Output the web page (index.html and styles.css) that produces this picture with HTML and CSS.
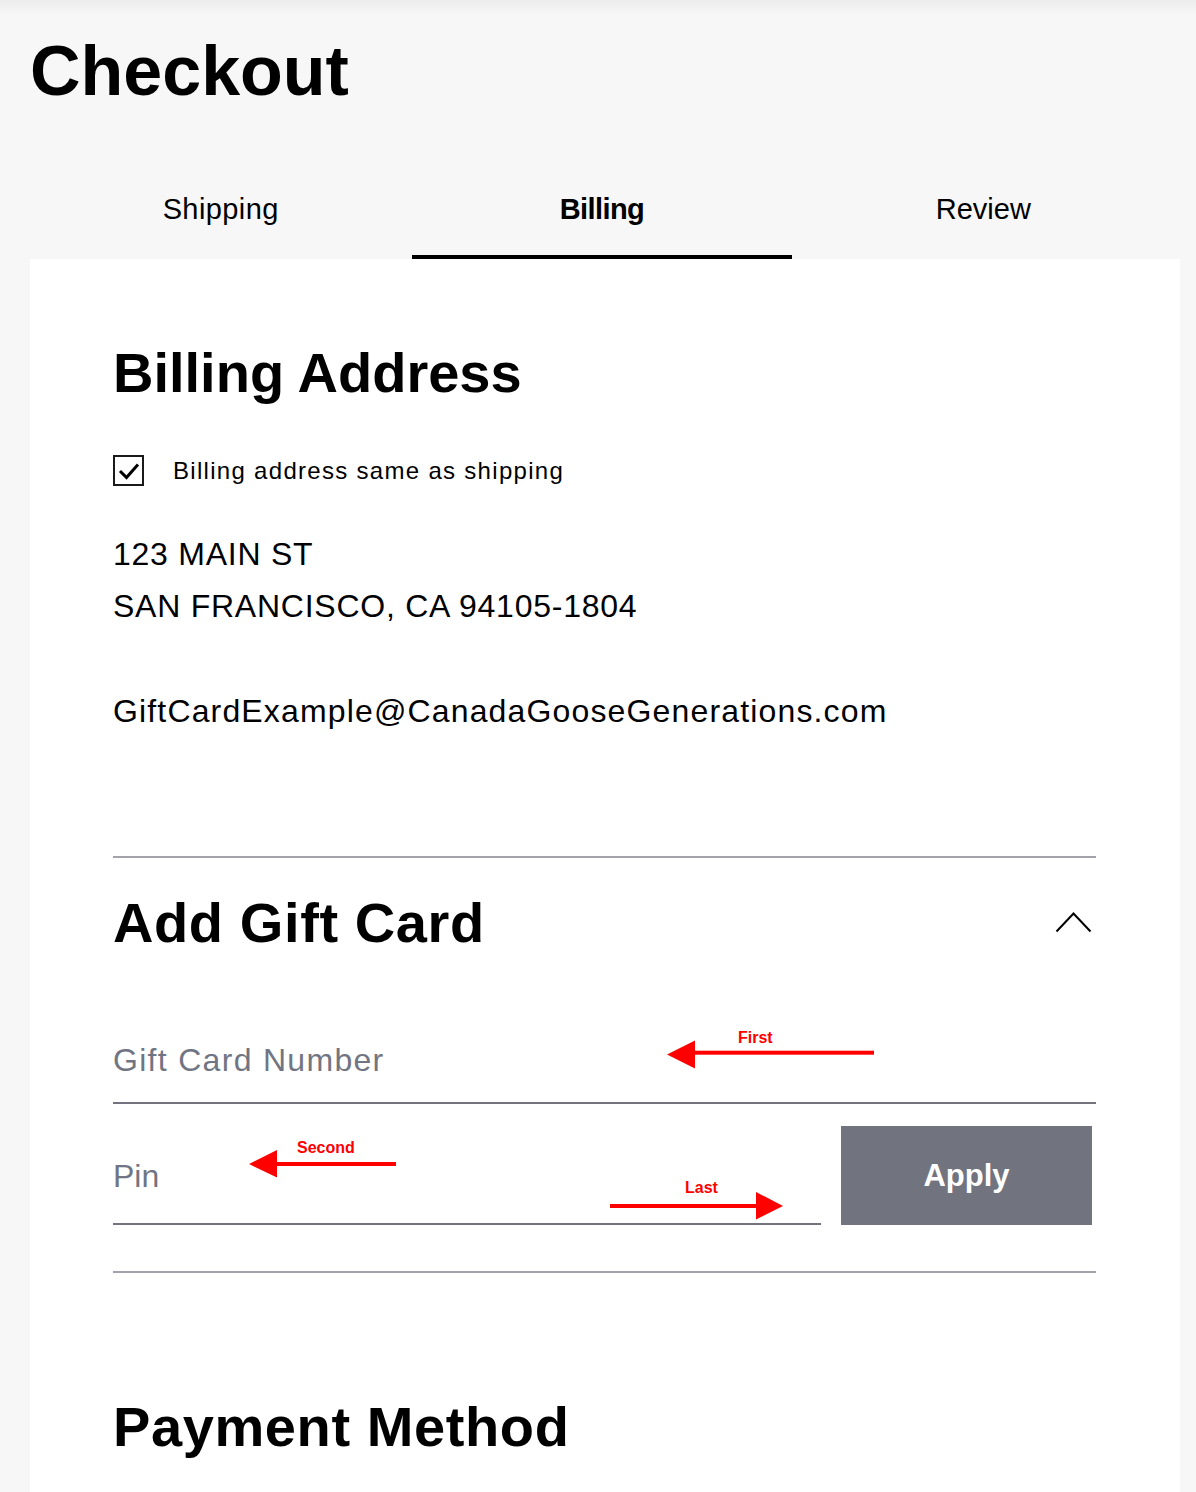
FILE: index.html
```html
<!DOCTYPE html>
<html lang="en">
<head>
<meta charset="utf-8">
<title>Checkout</title>
<link rel="stylesheet" href="styles.css">
</head>
<body>
<header class="page-head">
  <h1 class="title">Checkout</h1>
</header>
<nav class="tabs">
  <div class="tab">Shipping</div>
  <div class="tab active">Billing</div>
  <div class="tab">Review</div>
</nav>
<main class="card">
  <section class="billing">
    <h2 class="section-title">Billing Address</h2>
    <label class="check-row">
      <span class="checkbox">
        <svg width="27" height="27" viewBox="0 0 27 27"><polyline points="5,14 11.5,20.5 23,7.5" fill="none" stroke="#000" stroke-width="3"/></svg>
      </span>
      <span class="check-label">Billing address same as shipping</span>
    </label>
    <div class="address">
      <p>123 MAIN ST</p>
      <p>SAN FRANCISCO, CA 94105-1804</p>
    </div>
    <p class="email">GiftCardExample@CanadaGooseGenerations.com</p>
  </section>
  <hr class="divider">
  <section class="gift">
    <div class="gift-head">
      <h2 class="section-title wide">Add Gift Card</h2>
      <svg class="chevron" width="38" height="22" viewBox="0 0 38 22"><polyline points="1.5,20.5 18.5,2.5 35.5,20.5" fill="none" stroke="#000" stroke-width="2"/></svg>
    </div>
    <div class="field field-number"><span class="placeholder">Gift Card Number</span></div>
    <div class="pin-row">
      <div class="field field-pin"><span class="placeholder">Pin</span></div>
      <button class="apply" type="button">Apply</button>
    </div>
  </section>
  <hr class="divider">
  <section class="payment">
    <h2 class="section-title wide">Payment Method</h2>
  </section>
</main>
<div class="annotations">
  <svg class="arrows" width="1196" height="1492" viewBox="0 0 1196 1492">
    <polygon points="667,1054.5 695,1040.5 695,1068.5" fill="#ff0000"/>
    <rect x="694" y="1050.7" width="180" height="4" fill="#ff0000"/>
    <polygon points="249,1164 277,1150 277,1177.5" fill="#ff0000"/>
    <rect x="276" y="1162" width="120" height="4" fill="#ff0000"/>
    <polygon points="783,1206 756,1192 756,1219.5" fill="#ff0000"/>
    <rect x="610" y="1204" width="147" height="4" fill="#ff0000"/>
  </svg>
  <span class="note note-first">First</span>
  <span class="note note-second">Second</span>
  <span class="note note-last">Last</span>
</div>
</body>
</html>
```

FILE: styles.css
```css
html, body {
  margin: 0;
  padding: 0;
}
body {
  position: relative;
  height: 1492px;
  background: linear-gradient(#ececec 0, #f7f7f7 14px) no-repeat, #f7f7f7;
  font-family: "Liberation Sans", Arial, sans-serif;
  color: #000;
  overflow: hidden;
}
.page-head {
  padding: 31px 0 0 30px;
}
.title {
  margin: 0;
  font-size: 70px;
  line-height: 80px;
  font-weight: 700;
  letter-spacing: 0;
}
.tabs {
  display: grid;
  grid-template-columns: repeat(3, 1fr);
  margin-left: 30px;
  width: 1144px;
}
.tab {
  text-align: center;
  font-size: 29px;
  line-height: 36px;
  padding: 80px 0 28px;
  border-bottom: 4px solid transparent;
  margin: 0 1px;
}
.tab:first-child {
  letter-spacing: 0.4px;
}
.tab.active {
  font-weight: 700;
  letter-spacing: -0.6px;
  border-bottom-color: #000;
}
.card {
  margin-left: 30px;
  width: 1150px;
  box-sizing: border-box;
  background: #fff;
  padding: 82px 84px 34px 83px;
}
.section-title {
  margin: 0;
  font-size: 56px;
  line-height: 64px;
  font-weight: 700;
}
.section-title.wide {
  letter-spacing: 0.6px;
}
.check-row {
  display: flex;
  align-items: center;
  gap: 29px;
  margin-top: 50px;
  height: 31px;
}
.checkbox {
  width: 27px;
  height: 27px;
  border: 2px solid #1a1a1a;
  display: block;
}
.checkbox svg {
  display: block;
}
.check-label {
  font-size: 24px;
  line-height: 31px;
  letter-spacing: 1.3px;
}
.address {
  margin-top: 42px;
}
.address p,
.email {
  margin: 0;
  font-size: 32px;
  line-height: 52px;
  letter-spacing: 0.75px;
}
.email {
  margin-top: 53px;
  letter-spacing: 1.15px;
}
.divider {
  margin: 119px 0 0;
  border: 0;
  height: 2px;
  background: #a1a2aa;
}
.gift-head {
  margin-top: 33px;
  display: flex;
  align-items: center;
  justify-content: space-between;
}
.chevron {
  display: block;
  margin-right: 3px;
  margin-top: -2px;
}
.field {
  border-bottom: 2px solid #72737f;
  font-size: 32px;
  line-height: 40px;
  color: #717583;
}
.field-number {
  margin-top: 85px;
  padding-bottom: 22px;
  letter-spacing: 1.3px;
}
.pin-row {
  display: flex;
  align-items: flex-end;
  gap: 20px;
  margin-top: 22px;
  margin-right: 4px;
}
.field-pin {
  flex: 1;
  padding-bottom: 27px;
}
.apply {
  width: 251px;
  height: 99px;
  border: 0;
  background: #71737f;
  color: #fff;
  font-family: "Liberation Sans", Arial, sans-serif;
  font-size: 31px;
  font-weight: 700;
  padding: 0;
}
.gift + .divider {
  margin-top: 46px;
}
.payment {
  margin-top: 122px;
}
.annotations {
  position: absolute;
  left: 0;
  top: 0;
  width: 1196px;
  height: 1492px;
  pointer-events: none;
}
.arrows {
  position: absolute;
  left: 0;
  top: 0;
}
.note {
  position: absolute;
  color: #ff0000;
  font-size: 16px;
  line-height: 16px;
  font-weight: 700;
}
.note-first { left: 738px; top: 1030px; }
.note-second { left: 297px; top: 1140px; }
.note-last { left: 685px; top: 1180px; }
```
